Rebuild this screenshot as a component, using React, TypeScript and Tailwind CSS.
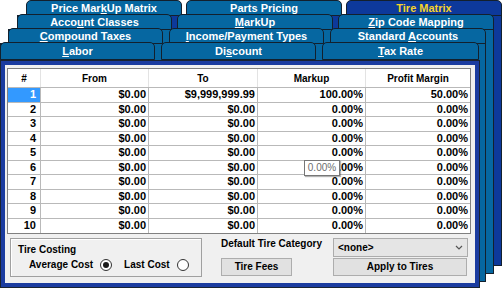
import React from 'react';

type TabProps = { w: string; selected?: boolean; children: React.ReactNode };

const Tab: React.FC<TabProps> = ({ w, selected = false, children }) => (
  <div
    className={`${w} flex shrink-0 items-center justify-center rounded-t-[5px] border border-[#13202d] text-[11px] font-bold leading-none ${
      selected ? 'bg-[#0d399b] text-[#f6d32a]' : 'bg-[#0667a1] text-white'
    }`}
  >
    <span className="whitespace-pre">{children}</span>
  </div>
);

const U: React.FC<{ children: React.ReactNode }> = ({ children }) => (
  <span className="underline decoration-1 underline-offset-[1px]">{children}</span>
);

const Radio: React.FC<{ checked?: boolean }> = ({ checked = false }) => (
  <span className="flex h-[12px] w-[12px] items-center justify-center rounded-full border border-[#333] bg-white">
    {checked && <span className="h-[6px] w-[6px] rounded-full bg-[#1a1a1a]" />}
  </span>
);

const cols = ['w-[33px]', 'w-[108px]', 'w-[109px]', 'w-[108px]', 'w-[104px]'];

const rows = Array.from({ length: 10 }, (_, i) => ({
  n: i + 1,
  from: '$0.00',
  to: i === 0 ? '$9,999,999.99' : '$0.00',
  markup: i === 0 ? '100.00%' : '0.00%',
  margin: i === 0 ? '50.00%' : '0.00%',
}));

export default function App() {
  return (
    <div className="grid h-[293px] w-[503px] overflow-hidden bg-white font-['Liberation_Sans',Arial,sans-serif] text-black">
      {/* row 1 tabs and the selected page behind */}
      <div className="col-start-1 row-start-1 flex flex-col">
        <div className="flex h-[16px] gap-[4px] pl-[26px]">
          <Tab w="w-[156px]">
            Price Mar<U>k</U>Up Matrix
          </Tab>
          <Tab w="w-[156px]">Parts Pricing</Tab>
          <Tab w="w-[156px]" selected>
            Tire Matrix
          </Tab>
        </div>
        <div className="-mt-px ml-[17px] h-[251px] w-[485px] border border-[#13202d] bg-[#0d399b]" />
      </div>

      {/* row 2 */}
      <div className="col-start-1 row-start-1 mt-[14px] flex flex-col">
        <div className="flex h-[16px] gap-[5px] pl-[17px]">
          <Tab w="w-[155px]">
            Acco<U>u</U>nt Classes
          </Tab>
          <Tab w="w-[156px]">
            <U>M</U>arkUp
          </Tab>
          <Tab w="w-[156px]">
            <U>Z</U>ip Code Mapping
          </Tab>
        </div>
        <div className="-mt-px ml-[8px] h-[245px] w-[486px] border border-[#13202d] bg-[#0667a1]" />
      </div>

      {/* row 3 */}
      <div className="col-start-1 row-start-1 mt-[28px] flex flex-col">
        <div className="flex h-[16px] gap-[6px] pl-[8px]">
          <Tab w="w-[155px]">
            <U>C</U>ompound Taxes
          </Tab>
          <Tab w="w-[155px]">
            <U>I</U>ncome/Payment Types
          </Tab>
          <Tab w="w-[156px]">
            Standard <U>A</U>ccounts
          </Tab>
        </div>
        <div className="-mt-px h-[239px] w-[486px] border border-[#13202d] bg-[#0667a1]" />
      </div>

      {/* row 4 and the visible page */}
      <div className="relative col-start-1 row-start-1 mt-[42px] flex flex-col">
        <div className="flex h-[18px] gap-[6px]">
          <Tab w="w-[155px]">
            <U>L</U>abor
          </Tab>
          <Tab w="w-[155px]">
            Di<U>s</U>count
          </Tab>
          <Tab w="w-[157px]">
            <U>T</U>ax Rate
          </Tab>
        </div>

        <div className="h-[228px] w-[480px] border border-[#1a2330] bg-[#1b3ca0] p-[4px]">
          <div className="flex h-full flex-col bg-[#f0f0f0] pl-[2px] pr-[4px] pt-[3px]">
            {/* grid */}
            <div className="w-[464px] border border-[#808080] bg-white">
              <div className="flex h-[19px] border-b border-[#b9b9b9] text-[10px] font-bold">
                {['#', 'From', 'To', 'Markup', 'Profit Margin'].map((h, i) => (
                  <div
                    key={h}
                    className={`${cols[i]} flex items-center justify-center ${i < 4 ? 'border-r border-[#e3e3e3]' : ''}`}
                  >
                    {h}
                  </div>
                ))}
              </div>
              {rows.map((r, ri) => (
                <div
                  key={r.n}
                  className={`flex h-[14.5px] text-[11px] font-bold leading-none ${ri < 9 ? 'border-b border-[#b9b9b9]' : ''}`}
                >
                  {[String(r.n), r.from, r.to, r.markup, r.margin].map((v, i) => (
                    <div
                      key={i}
                      className={`${cols[i]} flex items-center justify-end ${i === 0 ? 'pr-[4px]' : 'pr-[2px]'} ${
                        i < 4 ? 'border-r border-[#b9b9b9]' : ''
                      } ${ri === 0 && i === 0 ? 'bg-[#3399ff] text-white' : ''}`}
                    >
                      {v}
                    </div>
                  ))}
                </div>
              ))}
            </div>

            {/* bottom controls */}
            <div className="mt-[4px] flex text-[10px] font-bold leading-[12px]">
              <div className="ml-[3px] flex h-[39px] w-[192px] flex-col border border-[#a0a0a0] pl-[7px] pt-[5px] shadow-[inset_1px_1px_0_#ffffff]">
                <span>Tire Costing</span>
                <div className="mt-[3px] flex items-center pl-[11px]">
                  <span>Average Cost</span>
                  <span className="ml-[7px]">
                    <Radio checked />
                  </span>
                  <span className="ml-[12px]">Last Cost</span>
                  <span className="ml-[7px]">
                    <Radio />
                  </span>
                </div>
              </div>

              <div className="ml-[19px] flex flex-col">
                <div className="flex h-[19px]">
                  <span className="w-[112px]">Default Tire Category</span>
                  <div className="flex w-[135px] items-center justify-between border border-[#acacac] bg-[#e5e5e5] pl-[4px] pr-[4px]">
                    <span>&lt;none&gt;</span>
                    <svg width="8" height="5" viewBox="0 0 8 5" className="text-[#555]">
                      <polyline points="1,1 4,4 7,1" fill="none" stroke="currentColor" strokeWidth="1.2" />
                    </svg>
                  </div>
                </div>
                <div className="mt-[1px] flex h-[18px]">
                  <button className="flex w-[71px] items-center justify-center border border-[#adadad] bg-[#e1e1e1]">
                    Tire Fees
                  </button>
                  <button className="ml-[41px] flex w-[134px] items-center justify-center border border-[#adadad] bg-[#e1e1e1]">
                    Apply to Tires
                  </button>
                </div>
              </div>
            </div>
          </div>
        </div>

        {/* hover tooltip */}
        <div className="absolute left-[304px] top-[118px] flex h-[16px] w-[36px] items-center justify-center border border-[#767676] bg-white text-[10px] leading-none text-[#6d6d6d] shadow-[1px_1px_1px_rgba(0,0,0,0.3)]">
          0.00%
        </div>
      </div>
    </div>
  );
}
